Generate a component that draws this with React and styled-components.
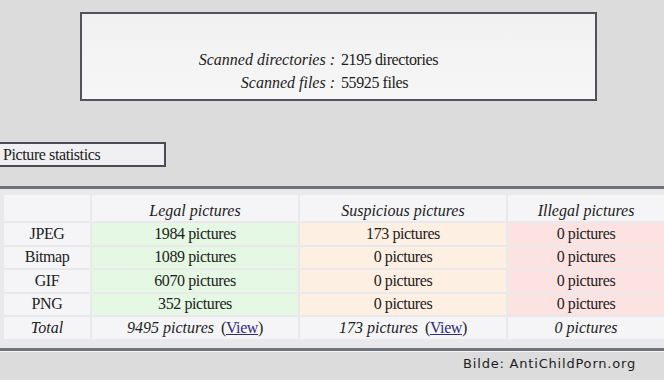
import React from 'react';
import styled, { createGlobalStyle } from 'styled-components';

const GlobalStyle = createGlobalStyle`
  html, body {
    margin: 0;
    padding: 0;
    background: #dcdcdc;
  }
  body {
    font-family: "Liberation Serif", "Times New Roman", serif;
    color: #1c1c1c;
    width: 664px;
    height: 380px;
    overflow: hidden;
  }
`;

const Page = styled.div`
  display: flex;
  flex-direction: column;
  padding-top: 12px;
`;

const ScanBox = styled.div`
  margin-left: 80px;
  width: 513px;
  height: 50px;
  border: 2px solid #50525e;
  background: linear-gradient(180deg, #f1f1f1 0%, #f6f6f6 100%);
  display: grid;
  grid-template-columns: 253px 1fr;
  align-content: start;
  padding-top: 35px;
  column-gap: 6px;
  row-gap: 2px;
  font-size: 16px;
  line-height: 21px;
`;

const ScanLabel = styled.div`
  text-align: right;
  font-style: italic;
`;

const ScanValue = styled.div`
  text-align: left;
  letter-spacing: -0.4px;
`;

const SectionTitle = styled.div`
  margin-top: 41px;
  width: 161px;
  height: 21px;
  border: 2px solid #4a4b55;
  border-left: none;
  background: #f0f0f2;
  padding-left: 3px;
  font-size: 16px;
  letter-spacing: -0.4px;
  line-height: 21px;
`;

const StatsPanel = styled.div`
  margin-top: 19px;
  border-top: 3px solid #6e727b;
  border-bottom: 3px solid #6e727b;
  box-shadow: 0 1px 0 #f4f4f4;
  background: #e9e9eb;
  padding: 6px 0 9px 4px;
  display: grid;
  grid-template-columns: 86px 206px 206px 1fr;
  grid-template-rows: 26px repeat(5, 21.5px);
  gap: 2px;
  font-size: 16px;
`;

const tones = {
  plain: '#f5f5f7',
  legal: '#e5f8e3',
  suspicious: '#fdefe2',
  illegal: '#fde2e2',
};

const Cell = styled.div`
  background: ${p => tones[p.$tone || 'plain']};
  display: flex;
  align-items: ${p => (p.$head ? 'flex-end' : 'center')};
  justify-content: center;
  font-style: ${p => (p.$italic ? 'italic' : 'normal')};
  letter-spacing: ${p => (p.$italic ? '0' : '-0.4px')};
  white-space: nowrap;
  padding-bottom: ${p => (p.$head ? '1px' : '0')};
`;

const ViewLink = styled.a`
  color: #2d2d7a;
  text-decoration: underline;
`;

const Paren = styled.span`
  font-style: normal;
  letter-spacing: -0.4px;
  margin-left: 7px;
`;

const Credit = styled.div`
  align-self: flex-end;
  margin: 5px 28px 0 0;
  font-family: "DejaVu Sans", Verdana, sans-serif;
  font-size: 13px;
  letter-spacing: 0.8px;
  color: #1e1e1e;
`;

const rows = [
  ['JPEG', '1984', '173', '0'],
  ['Bitmap', '1089', '0', '0'],
  ['GIF', '6070', '0', '0'],
  ['PNG', '352', '0', '0'],
];

const Total = ({ count, link }) => (
  <>
    <span>{count} pictures</span>
    {link && (
      <Paren>
        (<ViewLink href="#">View</ViewLink>)
      </Paren>
    )}
  </>
);

const App = () => (
  <Page>
    <GlobalStyle />
    <ScanBox>
      <ScanLabel>Scanned directories :</ScanLabel>
      <ScanValue>2195 directories</ScanValue>
      <ScanLabel>Scanned files :</ScanLabel>
      <ScanValue>55925 files</ScanValue>
    </ScanBox>

    <SectionTitle>Picture statistics</SectionTitle>

    <StatsPanel>
      <Cell $head />
      <Cell $head $italic>Legal pictures</Cell>
      <Cell $head $italic>Suspicious pictures</Cell>
      <Cell $head $italic>Illegal pictures</Cell>
      {rows.map(([type, legal, sus, ill]) => (
        <React.Fragment key={type}>
          <Cell>{type}</Cell>
          <Cell $tone="legal">{legal} pictures</Cell>
          <Cell $tone="suspicious">{sus} pictures</Cell>
          <Cell $tone="illegal">{ill} pictures</Cell>
        </React.Fragment>
      ))}
      <Cell $italic>Total</Cell>
      <Cell $italic>
        <Total count="9495" link />
      </Cell>
      <Cell $italic>
        <Total count="173" link />
      </Cell>
      <Cell $italic>
        <Total count="0" />
      </Cell>
    </StatsPanel>

    <Credit>Bilde: AntiChildPorn.org</Credit>
  </Page>
);

export default App;
